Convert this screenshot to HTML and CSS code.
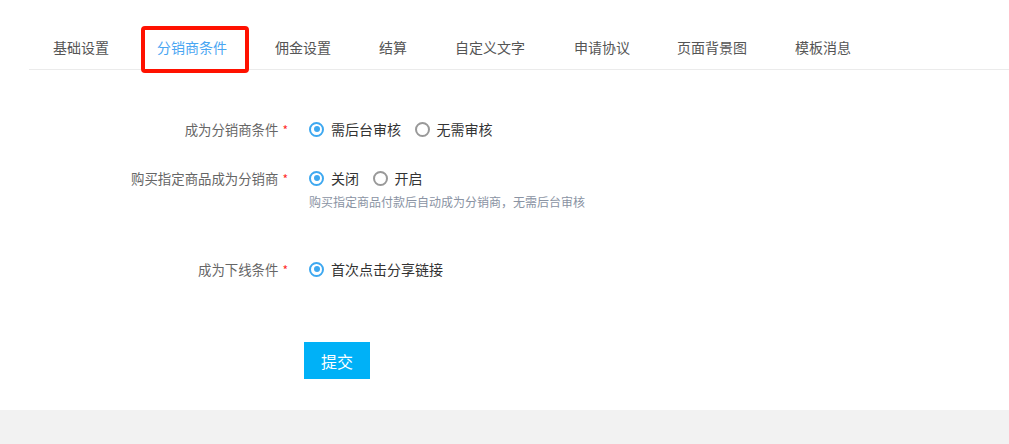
FILE: index.html
```html
<!DOCTYPE html>
<html lang="zh-CN">
<head>
    <meta charset="UTF-8">
    <meta name="viewport" content="width=device-width, initial-scale=1.0">
    <title>分销商条件</title>
    <link rel="stylesheet" href="styles.css">
</head>
<body>
    <div class="panel">
        <!-- Tabs -->
        <div class="tab-bar">
            <div class="tab">基础设置</div>
            <div class="tab active">分销商条件<span class="mark"></span></div>
            <div class="tab">佣金设置</div>
            <div class="tab">结算</div>
            <div class="tab">自定义文字</div>
            <div class="tab">申请协议</div>
            <div class="tab">页面背景图</div>
            <div class="tab">模板消息</div>
        </div>

        <!-- Form -->
        <form class="form">
            <div class="form-item">
                <label class="form-label">成为分销商条件<span class="req">*</span></label>
                <div class="form-control">
                    <span class="radio checked"><i></i>需后台审核</span>
                    <span class="radio"><i></i>无需审核</span>
                </div>
            </div>

            <div class="form-item with-tip">
                <label class="form-label">购买指定商品成为分销商<span class="req">*</span></label>
                <div class="form-control">
                    <span class="radio checked"><i></i>关闭</span>
                    <span class="radio"><i></i>开启</span>
                    <div class="tip">购买指定商品付款后自动成为分销商，无需后台审核</div>
                </div>
            </div>

            <div class="form-item">
                <label class="form-label">成为下线条件<span class="req">*</span></label>
                <div class="form-control">
                    <span class="radio checked"><i></i>首次点击分享链接</span>
                </div>
            </div>

            <div class="form-actions">
                <button type="button" class="btn">提交</button>
            </div>
        </form>
    </div>
</body>
</html>
```

FILE: styles.css
```css
body {
    margin: 0;
    background-color: #f2f2f2;
    font-family: "Noto Sans CJK SC", "Noto Sans", sans-serif;
    color: #333;
}

.panel {
    background-color: #fff;
    height: 410px;
    padding-top: 26px;
    box-sizing: border-box;
    box-shadow: 0 1px 2px rgba(0, 0, 0, 0.12);
}

/* Tab bar */
.tab-bar {
    display: flex;
    margin-left: 29px;
    border-bottom: 1px solid #ebebeb;
}

.tab {
    position: relative;
    padding: 0 24px;
    height: 43px;
    line-height: 43px;
    font-size: 14px;
    color: #555;
    cursor: pointer;
}

.tab:nth-child(5) {
    padding-right: 25px;
}

.tab:nth-child(6) {
    padding-right: 23px;
}

.tab.active {
    color: #4aa6f2;
}

/* red highlight box around the active tab */
.tab .mark {
    position: absolute;
    left: 8px;
    right: 2px;
    top: 0;
    bottom: -4px;
    border: 4px solid #ff1100;
    border-radius: 4px;
}

/* Form */
.form {
    padding-top: 44px;
}

.form-item {
    display: flex;
    margin-bottom: 18px;
}

.form-item.with-tip {
    margin-bottom: 43px;
}

.form-label {
    width: 304px;
    flex-shrink: 0;
    padding-right: 16px;
    box-sizing: border-box;
    text-align: right;
    font-size: 13.4px;
    line-height: 30px;
    color: #666;
}

.req {
    color: #ff2a2a;
    font-size: 12px;
    margin-left: 4px;
}

.form-control {
    padding-left: 5px;
}

.radio {
    display: inline-flex;
    align-items: center;
    height: 30px;
    font-size: 14px;
    color: #333;
    margin-right: 10px;
    cursor: pointer;
}

.radio i {
    width: 15px;
    height: 15px;
    box-sizing: border-box;
    border: 2px solid #999;
    border-radius: 50%;
    margin-right: 7px;
    position: relative;
}

.radio.checked i {
    border-color: #3ea8f0;
}

.radio.checked i::after {
    content: "";
    position: absolute;
    left: 2.5px;
    top: 2.5px;
    width: 6px;
    height: 6px;
    border-radius: 50%;
    background-color: #3ea8f0;
}

.tip {
    font-size: 12px;
    line-height: 18px;
    color: #8a93a3;
}

.form-actions {
    padding-left: 304px;
    margin-top: 57px;
}

.btn {
    width: 66px;
    height: 37px;
    border: none;
    background-color: #00b1f7;
    color: #fff;
    font-family: "Noto Sans CJK SC", sans-serif;
    font-size: 16px;
    cursor: pointer;
}
```
